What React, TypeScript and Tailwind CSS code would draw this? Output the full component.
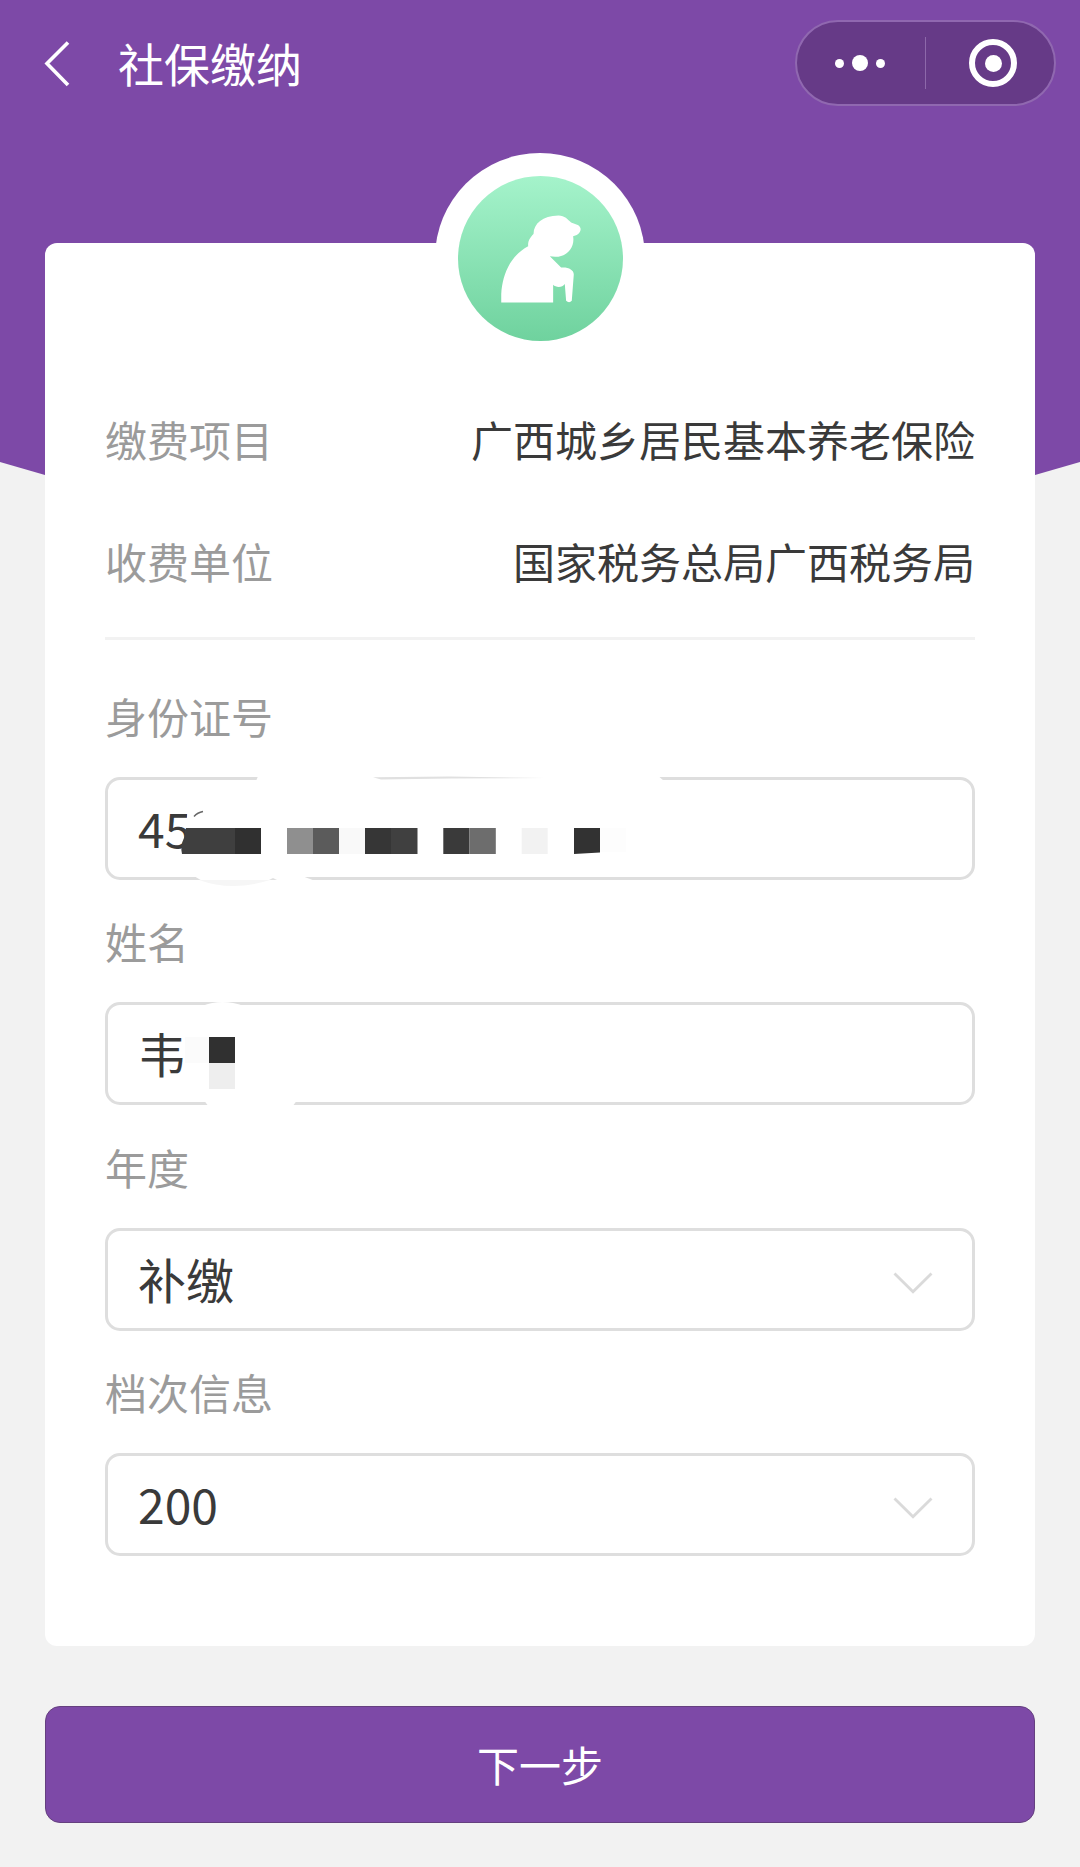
import type { ReactNode } from "react";

function BackIcon() {
  return (
    <svg className="mt-[2px]" width="26" height="46" viewBox="0 0 26 46" fill="none">
      <path d="M24 1.5 L3 22.5 L24 44" stroke="#fff" strokeWidth="3.6" />
    </svg>
  );
}

function ElderIcon() {
  return (
    <svg width="165" height="165" viewBox="114 107 496 496">
      <defs>
        <linearGradient id="mint" x1="0" y1="0" x2="0" y2="1">
          <stop offset="0" stopColor="#a5f3cb" />
          <stop offset="1" stopColor="#6fd29e" />
        </linearGradient>
      </defs>
      <circle cx="362" cy="355" r="248" fill="url(#mint)" />
      <path
        fill="#fff"
        d="M244 487 V462 C247 402 273 345 325 318 C323 302 332 290 341 281 C342 250 368 227 416 226 C435 226 444 238 454 247 L474 254 C486 260 486 276 471 284 L460 288 C466 320 442 351 406 350 L390 348 L424 382 C446 380 463 389 462 404 L456 482 Q448 491 439 482 L435 432 C428 443 408 443 400 434 V487 Z"
      />
    </svg>
  );
}

function Chevron() {
  return (
    <svg className="mt-[7px]" width="40" height="22" viewBox="0 0 40 22" fill="none">
      <path d="M1.5 1.5 L20 19.8 L38.5 1.5" stroke="#dadada" strokeWidth="2.8" />
    </svg>
  );
}

function Capsule() {
  return (
    <div className="flex h-[86px] w-[261px] items-center rounded-full border-2 border-[#9068b0] bg-[#663a87]">
      <div className="flex w-[128px] items-center justify-center gap-2 pr-[2px]">
        <span className="size-[9px] rounded-full bg-white" />
        <span className="size-4 rounded-full bg-white" />
        <span className="size-[9px] rounded-full bg-white" />
      </div>
      <div className="h-[52px] w-px bg-[#8d68aa]" />
      <div className="flex w-[128px] items-center justify-center pl-[6px]">
        <span className="flex size-12 items-center justify-center rounded-full border-[6px] border-white">
          <span className="size-[17px] rounded-full bg-white" />
        </span>
      </div>
    </div>
  );
}

function Row({ label, value }: { label: string; value: string }) {
  return (
    <div className="flex h-[122px] items-center justify-between pb-[2px] text-[42px] leading-none">
      <span className="text-[#9b9b9b]">{label}</span>
      <span className="text-[#3a3a3a]">{value}</span>
    </div>
  );
}

function Field({
  label,
  value,
  select,
  children,
}: {
  label: string;
  value: string;
  select?: boolean;
  children?: ReactNode;
}) {
  return (
    <div className="h-[225.3px]">
      <div className="flex h-[122px] items-center text-[42px] leading-none text-[#9b9b9b]">
        {label}
      </div>
      <div className="relative flex h-[103px] items-center justify-between rounded-[15px] border-[3px] border-[#dedede] pr-[39px] pl-[30px] text-[48px] leading-none text-[#3a3a3a]">
        <span className="pb-[3px]">{value}</span>
        {select && <Chevron />}
        {children}
      </div>
    </div>
  );
}

// Mosaic over the private part of the id number
function IdMask() {
  return (
    <svg
      className="absolute -top-[10px] -left-[3px]"
      width="600"
      height="122"
      viewBox="105 770 600 122"
    >
      <path fill="#fff" d="M259 774 H656 L664 781 H256 Z" />
      <path fill="#e0e0e0" d="M373 777.2 L450 776.6 L545 778 L450 778.6 L381 779.5 Z" />
      <path fill="#fff" d="M194 876 H302 L318 882 H204 Z" />
      <path fill="#f6f6f6" d="M199 880 H270 Q232 892 199 880 Z" />
      <path fill="#e0e0e0" d="M269 880 L273 878 L277 880 Z" />
      <path fill="#fff" d="M188 806 H240 V854 H184 Z" />
      <path d="M194 816.5 Q197.5 812.5 203 811.5" fill="none" stroke="#666" strokeWidth="1.4" />
      <path fill="#3f3f3f" d="M186 828 H235 V854 H182 Q180 846 184 838 Z" />
      <rect x="235" y="828" width="26" height="26" fill="#303030" />
      <rect x="287" y="828" width="26" height="26" fill="#8f8f8f" />
      <rect x="313" y="828" width="26" height="26" fill="#5b5b5b" />
      <rect x="339" y="828" width="26" height="26" fill="#f9f9f9" />
      <rect x="365" y="828" width="26" height="26" fill="#363636" />
      <rect x="391" y="828" width="26.5" height="26" fill="#404040" />
      <rect x="443.3" y="828" width="26" height="26" fill="#3a3a3a" />
      <rect x="469.3" y="828" width="26.5" height="26" fill="#6d6d6d" />
      <rect x="521.7" y="828" width="26" height="26" fill="#f2f2f2" />
      <path fill="#323232" d="M574 828 H600 V852.5 L574 854 Z" />
      <rect x="600" y="828" width="26" height="24" fill="#fdfdfd" />
    </svg>
  );
}

function NameMask() {
  return (
    <svg
      className="absolute -top-[5px] -left-[3px]"
      width="220"
      height="112"
      viewBox="105 1000 220 112"
    >
      <path fill="#fff" d="M202 1006 Q222 998 244 1006 Z" />
      <path fill="#fff" d="M203 1099 H298 L292 1107 H209 Z" />
      <rect x="185" y="1037" width="24" height="26" fill="#fbfbfb" />
      <rect x="209" y="1037" width="26" height="26" fill="#303030" />
      <rect x="209" y="1063" width="26" height="26" fill="#eeeeee" />
    </svg>
  );
}

export default function App() {
  return (
    <div className="relative h-[1867px] w-[1080px] overflow-hidden bg-[#f2f2f2] font-['Noto_Sans_CJK_SC',sans-serif]">
      <div className="absolute inset-x-0 top-0 h-[475px] bg-[#7d49a7] [clip-path:polygon(0_0,100%_0,100%_462px,1035px_475px,45px_475px,0_462px)]" />

      <div className="relative">
        <header className="flex h-[126px] items-center justify-between pr-[24px] pl-[44px]">
          <div className="flex items-center gap-[48px]">
            <BackIcon />
            <h1 className="pb-[3px] text-[46px] leading-none text-white">社保缴纳</h1>
          </div>
          <Capsule />
        </header>

        <main className="relative mx-[45px] mt-[117px] h-[1403px] rounded-[12px] bg-white px-[60px] pt-[136px]">
          <div className="absolute -top-[90px] left-1/2 flex size-[210px] -translate-x-1/2 items-center justify-center rounded-full bg-white">
            <ElderIcon />
          </div>

          <Row label="缴费项目" value="广西城乡居民基本养老保险" />
          <Row label="收费单位" value="国家税务总局广西税务局" />
          <div className="mt-[14px] mb-[15px] h-[3px] bg-[#f2f2f2]" />

          <Field label="身份证号" value="45">
            <IdMask />
          </Field>
          <Field label="姓名" value="韦">
            <NameMask />
          </Field>
          <Field label="年度" value="补缴" select />
          <Field label="档次信息" value="200" select />
        </main>

        <div className="mx-[45px] mt-[60px]">
          <button className="h-[117px] w-full rounded-[15px] border border-[#65407f] bg-[#7d49a7] pb-[2px] text-[42px] leading-none text-white">
            下一步
          </button>
        </div>
      </div>
    </div>
  );
}
